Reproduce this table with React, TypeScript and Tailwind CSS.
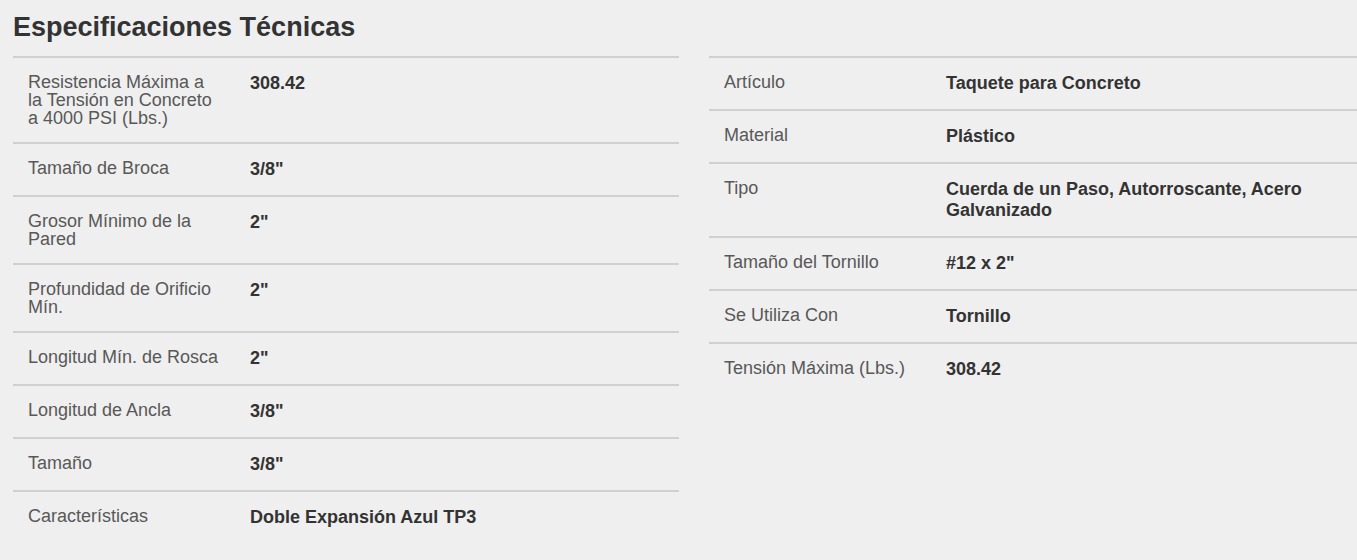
import React from 'react';

type Spec = { label: string; value: string };

const leftSpecs: Spec[] = [
  { label: 'Resistencia Máxima a la Tensión en Concreto a 4000 PSI (Lbs.)', value: '308.42' },
  { label: 'Tamaño de Broca', value: '3/8"' },
  { label: 'Grosor Mínimo de la Pared', value: '2"' },
  { label: 'Profundidad de Orificio Mín.', value: '2"' },
  { label: 'Longitud Mín. de Rosca', value: '2"' },
  { label: 'Longitud de Ancla', value: '3/8"' },
  { label: 'Tamaño', value: '3/8"' },
  { label: 'Características', value: 'Doble Expansión Azul TP3' },
];

const rightSpecs: Spec[] = [
  { label: 'Artículo', value: 'Taquete para Concreto' },
  { label: 'Material', value: 'Plástico' },
  { label: 'Tipo', value: 'Cuerda de un Paso, Autorroscante, Acero Galvanizado' },
  { label: 'Tamaño del Tornillo', value: '#12 x 2"' },
  { label: 'Se Utiliza Con', value: 'Tornillo' },
  { label: 'Tensión Máxima (Lbs.)', value: '308.42' },
];

const SpecTable = ({ specs }: { specs: Spec[] }) => {
  return (
    <div className="w-[666px] shrink-0">
      {specs.map((s) => (
        <div key={s.label} className="flex items-start border-t-2 border-[#d0d0d0] px-[15px] py-[15px]">
          <div className="w-[222px] shrink-0 pr-[28px] text-[18px] leading-[18px] text-[#585858]">{s.label}</div>
          <div className="flex-1 text-[18px] font-bold leading-[21px] text-[#333333]">{s.value}</div>
        </div>
      ))}
    </div>
  );
};

const App = () => {
  return (
    <div
      className="h-[560px] w-full overflow-hidden bg-[#efefef] px-[13px]"
      style={{ fontFamily: '"Liberation Sans", Arial, sans-serif' }}
    >
      <h2 className="pt-[12px] pb-[14px] text-[27px] font-bold leading-[30px] text-[#333333]">
        Especificaciones Técnicas
      </h2>
      <div className="flex gap-[30px]">
        <SpecTable specs={leftSpecs} />
        <SpecTable specs={rightSpecs} />
      </div>
    </div>
  );
};

export default App;
